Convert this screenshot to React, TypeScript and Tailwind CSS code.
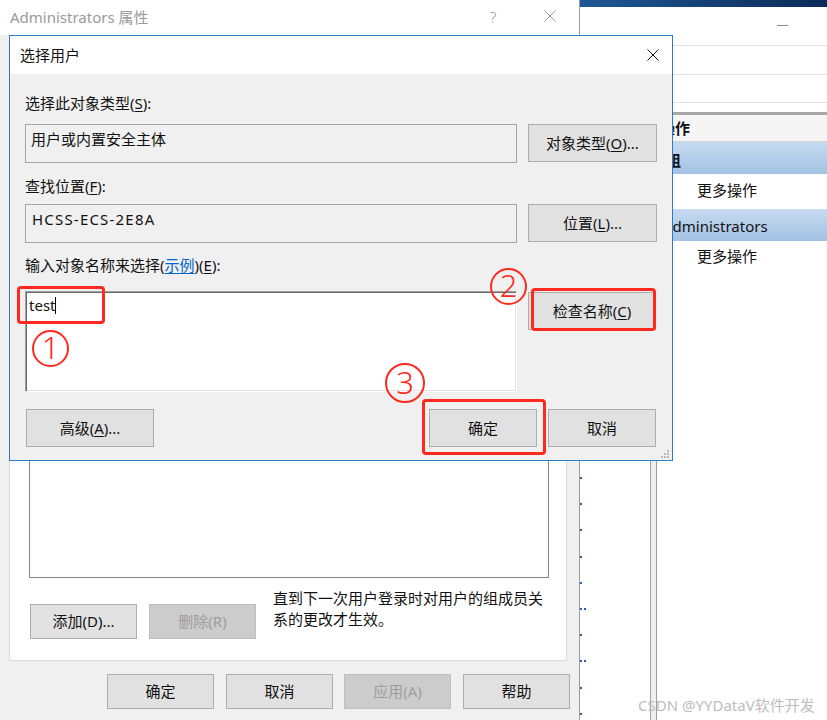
import React from "react";

const FONT = "font-['Noto_Sans','Noto_Sans_CJK_SC',sans-serif]";

function Btn({
  children,
  className = "",
  disabled = false,
}: {
  children: React.ReactNode;
  className?: string;
  disabled?: boolean;
}) {
  return (
    <div
      className={`flex items-center justify-center border text-[15px] ${
        disabled
          ? "bg-[#cccccc] border-[#bfbfbf] text-[#9d9d9d]"
          : "bg-[#e1e1e1] border-[#adadad] text-[#111]"
      } ${className}`}
    >
      {children}
    </div>
  );
}

function U({ children }: { children: React.ReactNode }) {
  return <span className="underline underline-offset-2">{children}</span>;
}

function Circled({ n, className }: { n: string; className: string }) {
  return (
    <div
      className={`absolute flex items-center justify-center rounded-full border-2 border-[#ff2a1f] text-[#ff2a1f] font-['Noto_Sans',sans-serif] font-light text-[31px] leading-none ${className}`}
    >
      <span className="-mt-[2px]">{n}</span>
    </div>
  );
}

function XIcon({ color, size }: { color: string; size: number }) {
  return (
    <svg width={size} height={size} viewBox="0 0 12 12">
      <path d="M0.5 0.5 L11.5 11.5 M11.5 0.5 L0.5 11.5" stroke={color} strokeWidth="1" fill="none" />
    </svg>
  );
}

function PropertiesWindow() {
  return (
    <div className="absolute left-0 top-0 w-[579px] h-[720px] bg-[#f0f0f0] flex flex-col">
      <div className="h-[35px] shrink-0 bg-white flex items-center pl-[10px] relative">
        <span className="text-[15px] text-[#9a9a9a]">Administrators 属性</span>
        <span className="absolute left-[490px] top-[6px] text-[15px] text-[#9a9a9a] font-['Noto_Sans',sans-serif] font-light">?</span>
        <div className="absolute left-[544px] top-[10px]">
          <XIcon color="#9a9a9a" size={12} />
        </div>
      </div>
      <div className="ml-[9px] mt-[35px] w-[558px] h-[591px] shrink-0 bg-white border border-[#dadada] flex flex-col">
        <div className="ml-[19px] mt-[19px] w-[520px] h-[488px] shrink-0 border border-[#828790] bg-white" />
        <div className="flex mt-[10px]">
          <Btn className="ml-[20px] mt-[16px] w-[107px] h-[35px]">添加(D)...</Btn>
          <Btn disabled className="ml-[12px] mt-[16px] w-[107px] h-[35px]">
            删除(R)
          </Btn>
          <div className="ml-[17px] w-[290px] text-[15px] leading-[21px] text-[#111]">
            直到下一次用户登录时对用户的组成员关
            <br />
            系的更改才生效。
          </div>
        </div>
      </div>
      <div className="flex mt-[13px] shrink-0">
        <Btn className="ml-[107px] w-[107px] h-[35px]">确定</Btn>
        <Btn className="ml-[12px] w-[107px] h-[35px]">取消</Btn>
        <Btn disabled className="ml-[11px] w-[107px] h-[35px]">
          应用(A)
        </Btn>
        <Btn className="ml-[12px] w-[107px] h-[35px]">帮助</Btn>
      </div>
    </div>
  );
}

function MmcWindow() {
  const dots = [0, 1, 2, 3, 4, 5, 6, 7, 8, 9];
  return (
    <div className="absolute left-[579px] top-0 w-[248px] h-[720px] bg-white border-l border-[#9a9a9a] flex flex-col overflow-hidden">
      <div className="h-[7px] shrink-0 bg-gradient-to-r from-[#1f5896] to-[#0b2b58]" />
      <div className="h-[39px] shrink-0 border-b border-[#e3e3e3] relative">
        <div className="absolute left-[197px] top-[18px] w-[11px] h-px bg-[#8a8a8a]" />
      </div>
      <div className="h-[29px] shrink-0 border-b border-[#e3e3e3]" />
      <div className="h-[28px] shrink-0 border-b border-[#e3e3e3]" />
      <div className="h-[9px] shrink-0" />
      <div className="h-[3px] shrink-0 bg-[#a8a8a8]" />
      <div className="flex-1 min-h-0 flex overflow-hidden">
        <div className="w-[70px] shrink-0 flex flex-col pt-[362px]">
          {dots.map((i) => (
            <div key={i} className="h-[26.2px] shrink-0 flex gap-[2px]">
              <div className="w-[2px] h-[2px] bg-[#2a5db0]" />
              {(i === 5 || i === 7) && <div className="w-[2px] h-[2px] bg-[#2a5db0]" />}
            </div>
          ))}
        </div>
        <div className="w-[7px] shrink-0 border-l border-r border-[#a0a0a0] bg-[#f0f0f0]" />
        <div className="flex-1 flex flex-col text-[15px] text-[#111]">
          <div className="h-[27px] shrink-0 bg-[#f5f5f5] border-b border-[#d5d5d5] flex items-center pl-[3px] font-semibold">
            操作
          </div>
          <div className="h-[32px] shrink-0 bg-gradient-to-b from-[#c6daef] to-[#a4c2e4] flex items-center pl-[9px] pt-[5px] font-semibold">
            组
          </div>
          <div className="h-[35px] shrink-0 flex items-center pl-[40px] pb-[3px]">更多操作</div>
          <div className="h-[32px] shrink-0 bg-gradient-to-b from-[#c6daef] to-[#a4c2e4] flex items-center pl-[6px] pt-[2px]">
            Administrators
          </div>
          <div className="h-[30px] shrink-0 flex items-center pl-[40px]">更多操作</div>
        </div>
      </div>
    </div>
  );
}

function SelectUserDialog() {
  return (
    <div className="absolute left-[9px] top-[35px] w-[664px] h-[426px] border border-[#2b7bc6] bg-[#f0f0f0] flex flex-col z-20">
      <div className="h-[38px] bg-white flex items-center justify-between pl-[10px] pr-[13px] shrink-0">
        <span className="text-[15px] text-[#111]">选择用户</span>
        <XIcon color="#111" size={12} />
      </div>
      <div className="flex-1 flex flex-col pl-[15px] pr-[15px] pt-[19px] relative text-[15px] text-[#111]">
        <div className="h-[21px] leading-[21px]">
          选择此对象类型(<U>S</U>):
        </div>
        <div className="flex mt-[10px] h-[39px]">
          <div className="w-[492px] h-[39px] border border-[#a5a5a5] pl-[5px] pt-[4px] leading-[21px]">
            用户或内置安全主体
          </div>
          <Btn className="ml-[11px] w-[129px] h-[38px]">
            对象类型(<U>O</U>)...
          </Btn>
        </div>
        <div className="h-[21px] leading-[21px] mt-[13px]">
          查找位置(<U>F</U>):
        </div>
        <div className="flex mt-[7px] h-[39px]">
          <div className="w-[492px] h-[39px] border border-[#a5a5a5] pl-[6px] pt-[4px] leading-[21px] tracking-[1.2px]">
            HCSS-ECS-2E8A
          </div>
          <Btn className="ml-[11px] w-[129px] h-[38px]">
            位置(<U>L</U>)...
          </Btn>
        </div>
        <div className="h-[21px] leading-[21px] mt-[12px]">
          输入对象名称来选择(<span className="text-[#0066cc] underline underline-offset-2">示例</span>)(<U>E</U>):
        </div>
        <div className="flex mt-[15px] h-[101px]">
          <div className="w-[492px] h-[101px] bg-white border border-t-[#a0a0a0] border-l-[#a0a0a0] border-r-white border-b-white shadow-[inset_1px_1px_0_#696969,inset_-1px_-1px_0_#e3e3e3] pl-[3px] pt-[3px] leading-[21px] flex items-start">
            <span>test</span>
            <span className="inline-block w-px h-[17px] bg-black mt-[2px]" />
          </div>
          <Btn className="ml-[11px] mt-[1px] w-[128px] h-[38px]">
            检查名称(<U>C</U>)
          </Btn>
        </div>
        <div className="flex mt-[17px] h-[38px]">
          <Btn className="ml-[1px] w-[128px] h-[38px]">
            高级(<U>A</U>)...
          </Btn>
          <Btn className="ml-[275px] w-[108px] h-[38px]">确定</Btn>
          <Btn className="ml-[11px] w-[108px] h-[38px]">取消</Btn>
        </div>
        <svg className="absolute right-[3px] bottom-[2px]" width="8" height="8" viewBox="0 0 8 8">
          <rect x="6" y="0" width="2" height="2" fill="#b8b8b8" />
          <rect x="3" y="3" width="2" height="2" fill="#b8b8b8" />
          <rect x="6" y="3" width="2" height="2" fill="#b8b8b8" />
          <rect x="0" y="6" width="2" height="2" fill="#b8b8b8" />
          <rect x="3" y="6" width="2" height="2" fill="#b8b8b8" />
          <rect x="6" y="6" width="2" height="2" fill="#b8b8b8" />
        </svg>
      </div>
    </div>
  );
}

export default function App() {
  return (
    <div className={`relative w-[827px] h-[720px] overflow-hidden bg-white ${FONT}`}>
      <PropertiesWindow />
      <MmcWindow />
      <SelectUserDialog />
      {/* annotations */}
      <div className="absolute z-30 left-[17px] top-[286px] w-[88px] h-[38px] border-[3px] border-[#ff2a1f] rounded-[4px]" />
      <div className="absolute z-30 left-[531px] top-[288px] w-[125px] h-[43px] border-[3px] border-[#ff2a1f] rounded-[4px]" />
      <div className="absolute z-30 left-[422px] top-[399px] w-[124px] h-[56px] border-[3px] border-[#ff2a1f] rounded-[4px]" />
      <Circled n="1" className="z-30 left-[32px] top-[330px] w-[37px] h-[37px]" />
      <Circled n="2" className="z-30 left-[490px] top-[268px] w-[37px] h-[37px]" />
      <Circled n="3" className="z-30 left-[385px] top-[363px] w-[40px] h-[40px]" />
      <div className="absolute z-30 left-[638px] top-[695px] text-[15px] leading-[20px] text-[#bdbdbd] whitespace-nowrap">
        CSDN @YYDataV软件开发
      </div>
    </div>
  );
}
